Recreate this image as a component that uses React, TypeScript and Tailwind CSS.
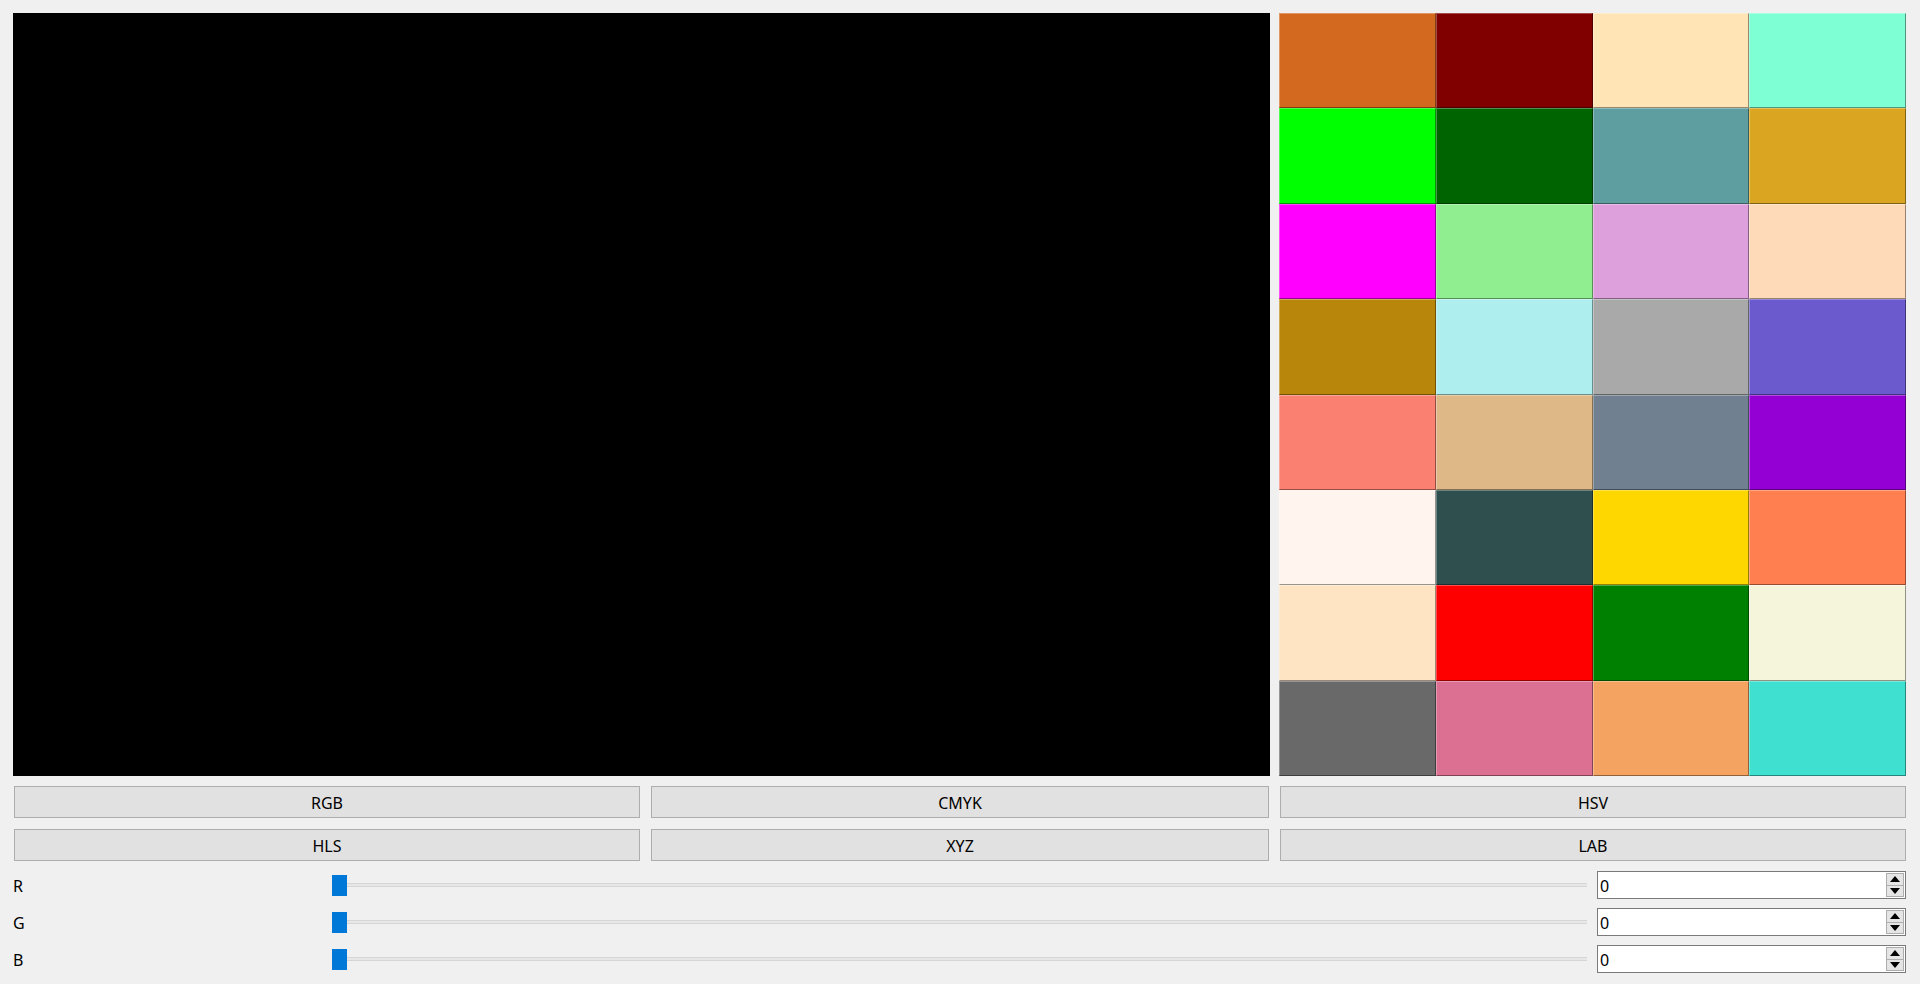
const SWATCHES = [
  "#d2691e", "#800000", "#ffe4b5", "#7fffd4",
  "#00ff00", "#006400", "#5f9ea0", "#daa520",
  "#ff00ff", "#90ee90", "#dda0dd", "#ffdab9",
  "#b8860b", "#afeeee", "#a9a9a9", "#6a5acd",
  "#fa8072", "#deb887", "#708090", "#9400d3",
  "#fff5ee", "#2f4f4f", "#ffd700", "#ff7f50",
  "#ffe4c4", "#ff0000", "#008000", "#f5f5dc",
  "#696969", "#db7093", "#f4a460", "#40e0d0",
];

function ModeButton({ label, className }: { label: string; className: string }) {
  return (
    <button
      className={`flex h-[32px] items-center justify-center border border-[#adadad] bg-[#e1e1e1] pt-[2px] text-[16px] text-black ${className}`}
    >
      {label}
    </button>
  );
}

function SpinBox() {
  return (
    <div className="flex h-[28px] w-[309px] items-stretch border border-[#7a7a7a] bg-white">
      <div className="flex flex-1 items-center pl-[2px] pt-[2px] text-[16px] text-black">0</div>
      <div className="flex w-[19px] flex-col py-[1px] pr-[1px]">
        <div className="flex flex-1 items-center justify-center border border-[#adadad] bg-[#e5e5e5]">
          <svg width="10" height="6" viewBox="0 0 10 6">
            <path d="M0 6 L5 0 L10 6 Z" fill="#000" />
          </svg>
        </div>
        <div className="flex flex-1 items-center justify-center border border-t-0 border-[#adadad] bg-[#e5e5e5]">
          <svg width="10" height="6" viewBox="0 0 10 6">
            <path d="M0 0 L10 0 L5 6 Z" fill="#000" />
          </svg>
        </div>
      </div>
    </div>
  );
}

function ChannelRow({ name }: { name: string }) {
  return (
    <div className="flex h-[28px] items-center">
      <div className="w-[319px] pt-[2px] text-[16px] text-black">{name}</div>
      <div className="relative flex h-[21px] w-[1255px] items-center">
        <div className="h-[4px] w-full border-y border-[#d6d6d6] bg-[#e7e7e7]" />
        <div className="absolute left-0 top-0 h-[21px] w-[15px] bg-[#0078d7]" />
      </div>
      <div className="ml-[10px]">
        <SpinBox />
      </div>
    </div>
  );
}

export default function App() {
  return (
    <div
      className="flex h-[984px] w-[1920px] flex-col bg-[#f0f0f0] pl-[13px] pr-[14px] pt-[13px]"
      style={{ fontFamily: '"Noto Sans", "Open Sans", sans-serif' }}
    >
      <div className="flex h-[763px] gap-[9px]">
        <div className="h-full w-[1257px] bg-black" />
        <div className="grid h-full flex-1 grid-cols-4 grid-rows-8">
          {SWATCHES.map((c, i) => (
            <div
              key={i}
              className="border border-b-black/40 border-l-white/30 border-r-black/40 border-t-white/30"
              style={{ backgroundColor: c }}
            />
          ))}
        </div>
      </div>
      <div className="mt-[10px] flex">
        <ModeButton label="RGB" className="ml-[1px] w-[626px]" />
        <ModeButton label="CMYK" className="ml-[11px] w-[618px]" />
        <ModeButton label="HSV" className="ml-[11px] flex-1" />
      </div>
      <div className="mt-[11px] flex">
        <ModeButton label="HLS" className="ml-[1px] w-[626px]" />
        <ModeButton label="XYZ" className="ml-[11px] w-[618px]" />
        <ModeButton label="LAB" className="ml-[11px] flex-1" />
      </div>
      <div className="mt-[10px] flex flex-col gap-[9px]">
        <ChannelRow name="R" />
        <ChannelRow name="G" />
        <ChannelRow name="B" />
      </div>
    </div>
  );
}
